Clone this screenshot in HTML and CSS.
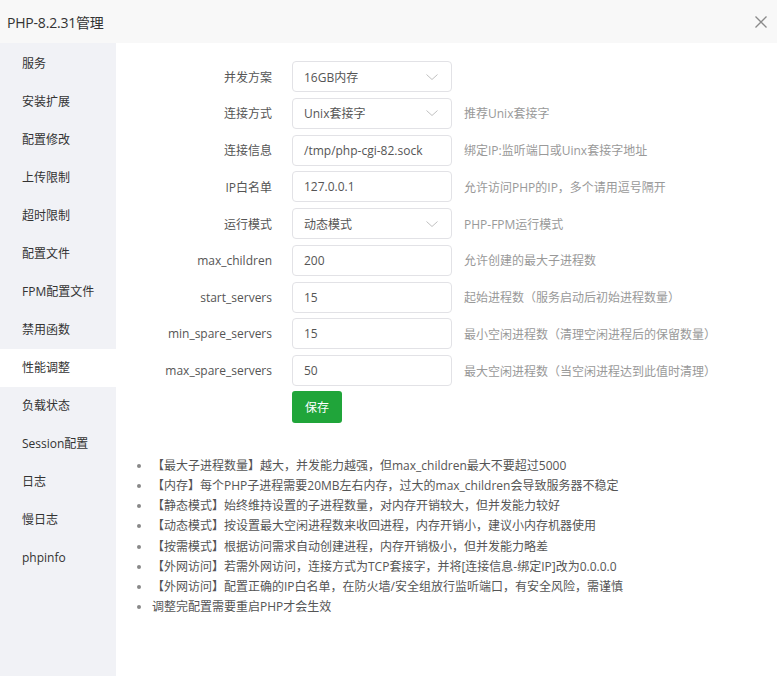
FILE: index.html
```html
<!DOCTYPE html>
<html lang="zh-CN">
<head>
<meta charset="utf-8">
<title>PHP-8.2.31管理</title>
<link rel="stylesheet" href="styles.css">
</head>
<body>
<div class="dialog">
  <div class="titlebar">
    <span class="title">PHP-8.2.31管理</span>
    <svg class="close" width="12" height="12" viewBox="0 0 12 12"><path d="M0.5 0.5L11.5 11.5M11.5 0.5L0.5 11.5" stroke="#8a8a8a" stroke-width="1.3" fill="none"/></svg>
  </div>
  <div class="main">
    <nav class="sidebar">
      <div class="nav-item">服务</div>
      <div class="nav-item">安装扩展</div>
      <div class="nav-item">配置修改</div>
      <div class="nav-item">上传限制</div>
      <div class="nav-item">超时限制</div>
      <div class="nav-item">配置文件</div>
      <div class="nav-item">FPM配置文件</div>
      <div class="nav-item">禁用函数</div>
      <div class="nav-item active">性能调整</div>
      <div class="nav-item">负载状态</div>
      <div class="nav-item">Session配置</div>
      <div class="nav-item">日志</div>
      <div class="nav-item">慢日志</div>
      <div class="nav-item">phpinfo</div>
    </nav>
    <section class="content">
      <div class="form">
        <div class="row"><label class="label">并发方案</label><div class="field select"><span>16GB内存</span><svg class="chev" width="12" height="6" viewBox="0 0 12 6"><path d="M0.5 0.5L6 5.5L11.5 0.5" stroke="#c0c0c0" fill="none"/></svg></div></div>
        <div class="row"><label class="label">连接方式</label><div class="field select"><span>Unix套接字</span><svg class="chev" width="12" height="6" viewBox="0 0 12 6"><path d="M0.5 0.5L6 5.5L11.5 0.5" stroke="#c0c0c0" fill="none"/></svg></div><span class="hint">推荐Unix套接字</span></div>
        <div class="row"><label class="label">连接信息</label><div class="field"><span>/tmp/php-cgi-82.sock</span></div><span class="hint">绑定IP:监听端口或Uinx套接字地址</span></div>
        <div class="row"><label class="label">IP白名单</label><div class="field"><span>127.0.0.1</span></div><span class="hint">允许访问PHP的IP，多个请用逗号隔开</span></div>
        <div class="row"><label class="label">运行模式</label><div class="field select"><span>动态模式</span><svg class="chev" width="12" height="6" viewBox="0 0 12 6"><path d="M0.5 0.5L6 5.5L11.5 0.5" stroke="#c0c0c0" fill="none"/></svg></div><span class="hint">PHP-FPM运行模式</span></div>
        <div class="row"><label class="label">max_children</label><div class="field"><span>200</span></div><span class="hint">允许创建的最大子进程数</span></div>
        <div class="row"><label class="label">start_servers</label><div class="field"><span>15</span></div><span class="hint">起始进程数（服务启动后初始进程数量）</span></div>
        <div class="row"><label class="label">min_spare_servers</label><div class="field"><span>15</span></div><span class="hint">最小空闲进程数（清理空闲进程后的保留数量）</span></div>
        <div class="row"><label class="label">max_spare_servers</label><div class="field"><span>50</span></div><span class="hint">最大空闲进程数（当空闲进程达到此值时清理）</span></div>
        <div class="row btn-row"><span class="label"></span><button class="btn">保存</button></div>
      </div>
      <ul class="tips">
        <li>【最大子进程数量】越大，并发能力越强，但max_children最大不要超过5000</li>
        <li>【内存】每个PHP子进程需要20MB左右内存，过大的max_children会导致服务器不稳定</li>
        <li>【静态模式】始终维持设置的子进程数量，对内存开销较大，但并发能力较好</li>
        <li>【动态模式】按设置最大空闲进程数来收回进程，内存开销小，建议小内存机器使用</li>
        <li>【按需模式】根据访问需求自动创建进程，内存开销极小，但并发能力略差</li>
        <li>【外网访问】若需外网访问，连接方式为TCP套接字，并将[连接信息-绑定IP]改为0.0.0.0</li>
        <li>【外网访问】配置正确的IP白名单，在防火墙/安全组放行监听端口，有安全风险，需谨慎</li>
        <li>调整完配置需要重启PHP才会生效</li>
      </ul>
    </section>
  </div>
</div>
</body>
</html>
```
FILE: styles.css
```css
* { box-sizing: border-box; }
html, body {
  margin: 0;
  padding: 0;
  background: #fff;
  font-family: "Open Sans", "Noto Sans CJK SC", sans-serif;
  color: #333;
}
.dialog {
  width: 777px;
  height: 676px;
  display: flex;
  flex-direction: column;
  overflow: hidden;
}
.titlebar {
  height: 43px;
  flex: none;
  background: #f8f8f8;
  display: flex;
  align-items: center;
  justify-content: space-between;
  padding: 0 10px 0 7px;
  font-size: 14px;
  color: #333;
}
.title { letter-spacing: -0.2px; }
.close { display: block; margin-top: 1px; }
.main {
  flex: 1;
  display: flex;
}
.sidebar {
  width: 116px;
  flex: none;
  background: #f1f2f6;
  padding-top: 2px;
}
.nav-item {
  height: 38px;
  line-height: 38px;
  padding-left: 22px;
  font-size: 12px;
  color: #333;
}
.nav-item.active { background: #fff; }
.content {
  flex: 1;
  padding-top: 18px;
}
.form {
  display: flex;
  flex-direction: column;
  gap: 5.75px;
}
.row {
  display: flex;
  align-items: center;
  height: 31px;
}
.label {
  width: 156px;
  flex: none;
  text-align: right;
  margin-right: 20px;
  font-size: 12px;
  color: #555;
}
.field {
  width: 160px;
  height: 31px;
  flex: none;
  border: 1px solid #e2e2e6;
  border-radius: 4px;
  display: flex;
  align-items: center;
  justify-content: space-between;
  padding: 0 13px 0 11px;
  font-size: 12px;
  color: #555;
}
.chev { display: block; }
.hint {
  margin-left: 12px;
  font-size: 12px;
  color: #999;
}
.btn-row {
  height: 32px;
  margin-top: -1px;
}
.btn {
  width: 50px;
  height: 32px;
  border: none;
  border-radius: 3px;
  background: #20a53a;
  color: #fff;
  font-family: inherit;
  font-size: 12px;
  padding: 0;
}
.tips {
  list-style: none;
  margin: 33px 0 0 0;
  padding: 0 0 0 21px;
  font-size: 12px;
  color: #555;
}
.tips li {
  line-height: 20.2px;
  position: relative;
  padding-left: 15px;
}
.tips li::before {
  content: "";
  position: absolute;
  left: 0;
  top: 8px;
  width: 4px;
  height: 4px;
  border-radius: 50%;
  background: #888;
}
```
